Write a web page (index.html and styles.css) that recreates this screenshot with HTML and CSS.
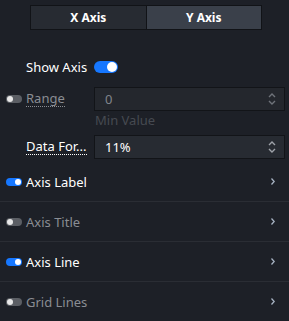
FILE: index.html
```html
<!DOCTYPE html>
<html lang="en">
<head>
  <meta charset="UTF-8">
  <title>Axis Settings</title>
  <link rel="stylesheet" href="styles.css">
</head>
<body>

<!-- Axis tabs -->
<div class="tabs">
  <div class="tab">X Axis</div>
  <div class="tab active">Y Axis</div>
</div>

<!-- Fields -->
<div class="field show-axis">
  <div class="label"><span class="text">Show Axis</span></div>
  <div class="control"><span class="switch big on"></span></div>
</div>

<div class="field">
  <div class="label"><span class="switch"></span><span class="text muted dotted">Range</span></div>
  <div class="control">
    <div class="input disabled">
      <span>0</span>
      <svg class="spin" width="8" height="14" viewBox="0 0 8 14"><path d="M1 5 L4 2 L7 5" /><path d="M1 9 L4 12 L7 9" /></svg>
    </div>
  </div>
</div>
<div class="hint">Min Value</div>

<div class="field">
  <div class="label"><span class="text dotted" title="Data Format">Data For...</span></div>
  <div class="control">
    <div class="input">
      <span>11%</span>
      <svg class="spin" width="8" height="14" viewBox="0 0 8 14"><path d="M1 5 L4 2 L7 5" /><path d="M1 9 L4 12 L7 9" /></svg>
    </div>
  </div>
</div>

<!-- Collapse panels -->
<div class="panels">
  <div class="panel">
    <span class="switch on"></span><span class="title">Axis Label</span>
    <svg class="arrow" width="4" height="7" viewBox="0 0 4 7"><path d="M0.5 0.5 L3.2 3.5 L0.5 6.5" /></svg>
  </div>
  <div class="panel">
    <span class="switch"></span><span class="title muted">Axis Title</span>
    <svg class="arrow" width="4" height="7" viewBox="0 0 4 7"><path d="M0.5 0.5 L3.2 3.5 L0.5 6.5" /></svg>
  </div>
  <div class="panel">
    <span class="switch on"></span><span class="title">Axis Line</span>
    <svg class="arrow" width="4" height="7" viewBox="0 0 4 7"><path d="M0.5 0.5 L3.2 3.5 L0.5 6.5" /></svg>
  </div>
  <div class="panel">
    <span class="switch"></span><span class="title muted">Grid Lines</span>
    <svg class="arrow" width="4" height="7" viewBox="0 0 4 7"><path d="M0.5 0.5 L3.2 3.5 L0.5 6.5" /></svg>
  </div>
</div>

</body>
</html>
```

FILE: styles.css
```css
body {
  font-family: "Noto Sans", "Open Sans", sans-serif;
  font-size: 12px;
  margin: 0;
  padding: 0;
  background-color: #1d2027;
  color: #fff;
  width: 289px;
  height: 321px;
  overflow: hidden;
}

.tabs {
  display: flex;
  width: 230px;
  height: 23px;
  margin: 5px 0 0 30px;
  border: 1px solid #111317;
}

.tab {
  flex: 1;
  display: flex;
  align-items: center;
  justify-content: center;
  background-color: #272b32;
  font-weight: bold;
  color: #fff;
}

.tab.active {
  background-color: #3a404a;
  border-left: 1px solid #111317;
}

.field {
  display: flex;
  align-items: center;
  height: 24px;
  margin-top: 8px;
}

.field.show-axis {
  margin-top: 25px;
  margin-bottom: 7px;
}

.label {
  display: flex;
  align-items: center;
  width: 88px;
  padding-left: 6px;
  white-space: nowrap;
}

.label .text {
  margin-left: 20px;
  font-size: 13px;
}

.label .switch + .text {
  margin-left: 4px;
}

.dotted {
  border-bottom: 1px dotted currentColor;
  line-height: 15px;
}

.muted {
  color: #8a8d93;
}

.control {
  display: flex;
  align-items: center;
}

.input {
  display: flex;
  align-items: center;
  justify-content: space-between;
  box-sizing: border-box;
  width: 191px;
  height: 24px;
  padding: 0 8px 0 10px;
  background-color: #272b32;
  border: 1px solid #121418;
  font-size: 13px;
  color: #fff;
}

.input.disabled {
  background-color: #24272d;
  color: #80848b;
}

.spin path {
  fill: none;
  stroke: #9ea2a9;
  stroke-width: 1.4;
}

.input.disabled .spin path {
  stroke: #6f737a;
}

.hint {
  margin: 0 0 0 95px;
  height: 16px;
  font-size: 13px;
  color: #464a51;
}

.switch {
  position: relative;
  display: inline-block;
  width: 16px;
  height: 8px;
  border-radius: 4px;
  background-color: #5b5e64;
  flex-shrink: 0;
}

.switch::after {
  content: "";
  position: absolute;
  top: 1px;
  left: 1px;
  width: 6px;
  height: 6px;
  border-radius: 50%;
  background-color: #e8e8e8;
}

.switch.on {
  background-color: #1677ff;
}

.switch.on::after {
  left: 9px;
  background-color: #fff;
}

.switch.big {
  width: 24px;
  height: 12px;
  border-radius: 6px;
}

.switch.big::after {
  width: 10px;
  height: 10px;
}

.switch.big.on::after {
  left: 13px;
}

.panels {
  margin-top: 3px;
}

.panel {
  display: flex;
  align-items: center;
  height: 39px;
  padding: 0 14px 0 6px;
  border-bottom: 1px solid #2a2d34;
}

.panel:last-child {
  border-bottom: none;
}

.panel .title {
  flex: 1;
  margin-left: 4px;
  font-size: 13px;
}

.arrow path {
  fill: none;
  stroke: #a8b4c4;
  stroke-width: 1.3;
}
```
